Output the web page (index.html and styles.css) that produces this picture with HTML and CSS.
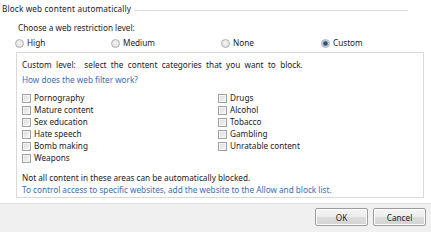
FILE: index.html
```html
<!DOCTYPE html>
<html>
<head>
<meta charset="utf-8">
<link rel="stylesheet" href="styles.css">
</head>
<body>
<div class="page">
  <div class="group-title"><span>Block web content automatically</span></div>
  <div class="level-label">Choose a web restriction level:</div>
  <div class="radios">
    <label class="radio"><span class="radio-dot"></span>High</label>
    <label class="radio"><span class="radio-dot"></span>Medium</label>
    <label class="radio"><span class="radio-dot"></span>None</label>
    <label class="radio"><span class="radio-dot checked"></span>Custom</label>
  </div>
  <div class="box">
    <div class="line custom-line">Custom level:&nbsp; select the content categories that you want to block.</div>
    <div class="line link link-first">How does the web filter work?</div>
    <div class="checks">
      <div class="col">
        <label class="check"><span class="cb"></span>Pornography</label>
        <label class="check"><span class="cb"></span>Mature content</label>
        <label class="check"><span class="cb"></span>Sex education</label>
        <label class="check"><span class="cb"></span>Hate speech</label>
        <label class="check"><span class="cb"></span>Bomb making</label>
        <label class="check"><span class="cb"></span>Weapons</label>
      </div>
      <div class="col">
        <label class="check"><span class="cb"></span>Drugs</label>
        <label class="check"><span class="cb"></span>Alcohol</label>
        <label class="check"><span class="cb"></span>Tobacco</label>
        <label class="check"><span class="cb"></span>Gambling</label>
        <label class="check"><span class="cb"></span>Unratable content</label>
      </div>
    </div>
    <div class="line note">Not all content in these areas can be automatically blocked.</div>
    <div class="line link">To control access to specific websites, add the website to the Allow and block list.</div>
  </div>
  <div class="footer">
    <button class="btn">OK</button>
    <button class="btn">Cancel</button>
  </div>
</div>
</body>
</html>
```

FILE: styles.css
```css
html, body {
  margin: 0;
  padding: 0;
  background: #ffffff;
}
body {
  width: 431px;
  height: 232px;
  overflow: hidden;
  font-family: "Noto Sans", "Open Sans", sans-serif;
  font-size: 8.2px;
  color: #232028;
}
.page {
  display: flex;
  flex-direction: column;
  height: 232px;
}
.group-title {
  display: flex;
  align-items: center;
  height: 18px;
  line-height: 18px;
  padding-left: 2px;
  margin-right: 23px;
  letter-spacing: 0.15px;
}
.group-title::after {
  content: "";
  flex: 1;
  border-top: 1px solid #dcdcdc;
  margin-left: 3px;
  margin-top: 3px;
}
.level-label {
  margin-top: 4px;
  margin-left: 18px;
  line-height: 12px;
  height: 12px;
}
.radios {
  margin-top: 3px;
  margin-left: 15px;
  display: grid;
  grid-template-columns: 96px 110px 100px auto;
  height: 12px;
  line-height: 12px;
}
.radio {
  display: flex;
  align-items: center;
}
.radio-dot {
  width: 7px;
  height: 7px;
  border: 1px solid #b0b0b0;
  border-radius: 50%;
  background: radial-gradient(circle at 50% 40%, #f6f6f6 0%, #dadada 100%);
  margin-right: 3px;
  box-sizing: content-box;
}
.radio-dot.checked {
  background: radial-gradient(circle at 50% 50%, #2c4f74 0%, #2c4f74 35%, #8fb0cf 50%, #e8e8e8 75%);
}
.box {
  margin-top: 3px;
  margin-left: 16px;
  width: 401px;
  border: 1px solid #d9d9d9;
  padding: 6px 0 1px 5px;
}
.line {
  line-height: 12px;
  height: 12px;
  white-space: nowrap;
}
.custom-line {
  word-spacing: 2.2px;
}
.link {
  color: #3a6cc0;
}
.link-first {
  margin-top: 3px;
}
.checks {
  margin-top: 6px;
  display: grid;
  grid-template-columns: 196px auto;
}
.col {
  display: flex;
  flex-direction: column;
}
.check {
  display: flex;
  align-items: center;
  height: 12px;
  line-height: 12px;
}
.cb {
  width: 7px;
  height: 7px;
  border: 1px solid #a2a2a2;
  background: linear-gradient(135deg, #d8d8d8 0%, #ececec 60%, #f8f8f8 100%);
  box-shadow: inset 0 0 0 1px #f4f4f4;
  margin-right: 3px;
  flex: none;
}
.note {
  margin-top: 8px;
}
.footer {
  margin-top: 5px;
  flex: 1;
  background: #f0f0f0;
  border-top: 1px solid #dedede;
  display: flex;
  justify-content: flex-end;
  align-items: flex-start;
  gap: 5px;
  padding: 4px 5px 0 0;
}
.btn {
  width: 53px;
  height: 18px;
  padding: 0;
  font-family: inherit;
  font-size: 8.2px;
  color: #232028;
  border: 1px solid #9d9d9d;
  border-radius: 2px;
  background: linear-gradient(to bottom, #f6f6f6 0%, #ececec 48%, #dcdcdc 52%, #d4d4d4 100%);
  box-shadow: inset 0 0 0 1px #fbfbfb;
}
```
